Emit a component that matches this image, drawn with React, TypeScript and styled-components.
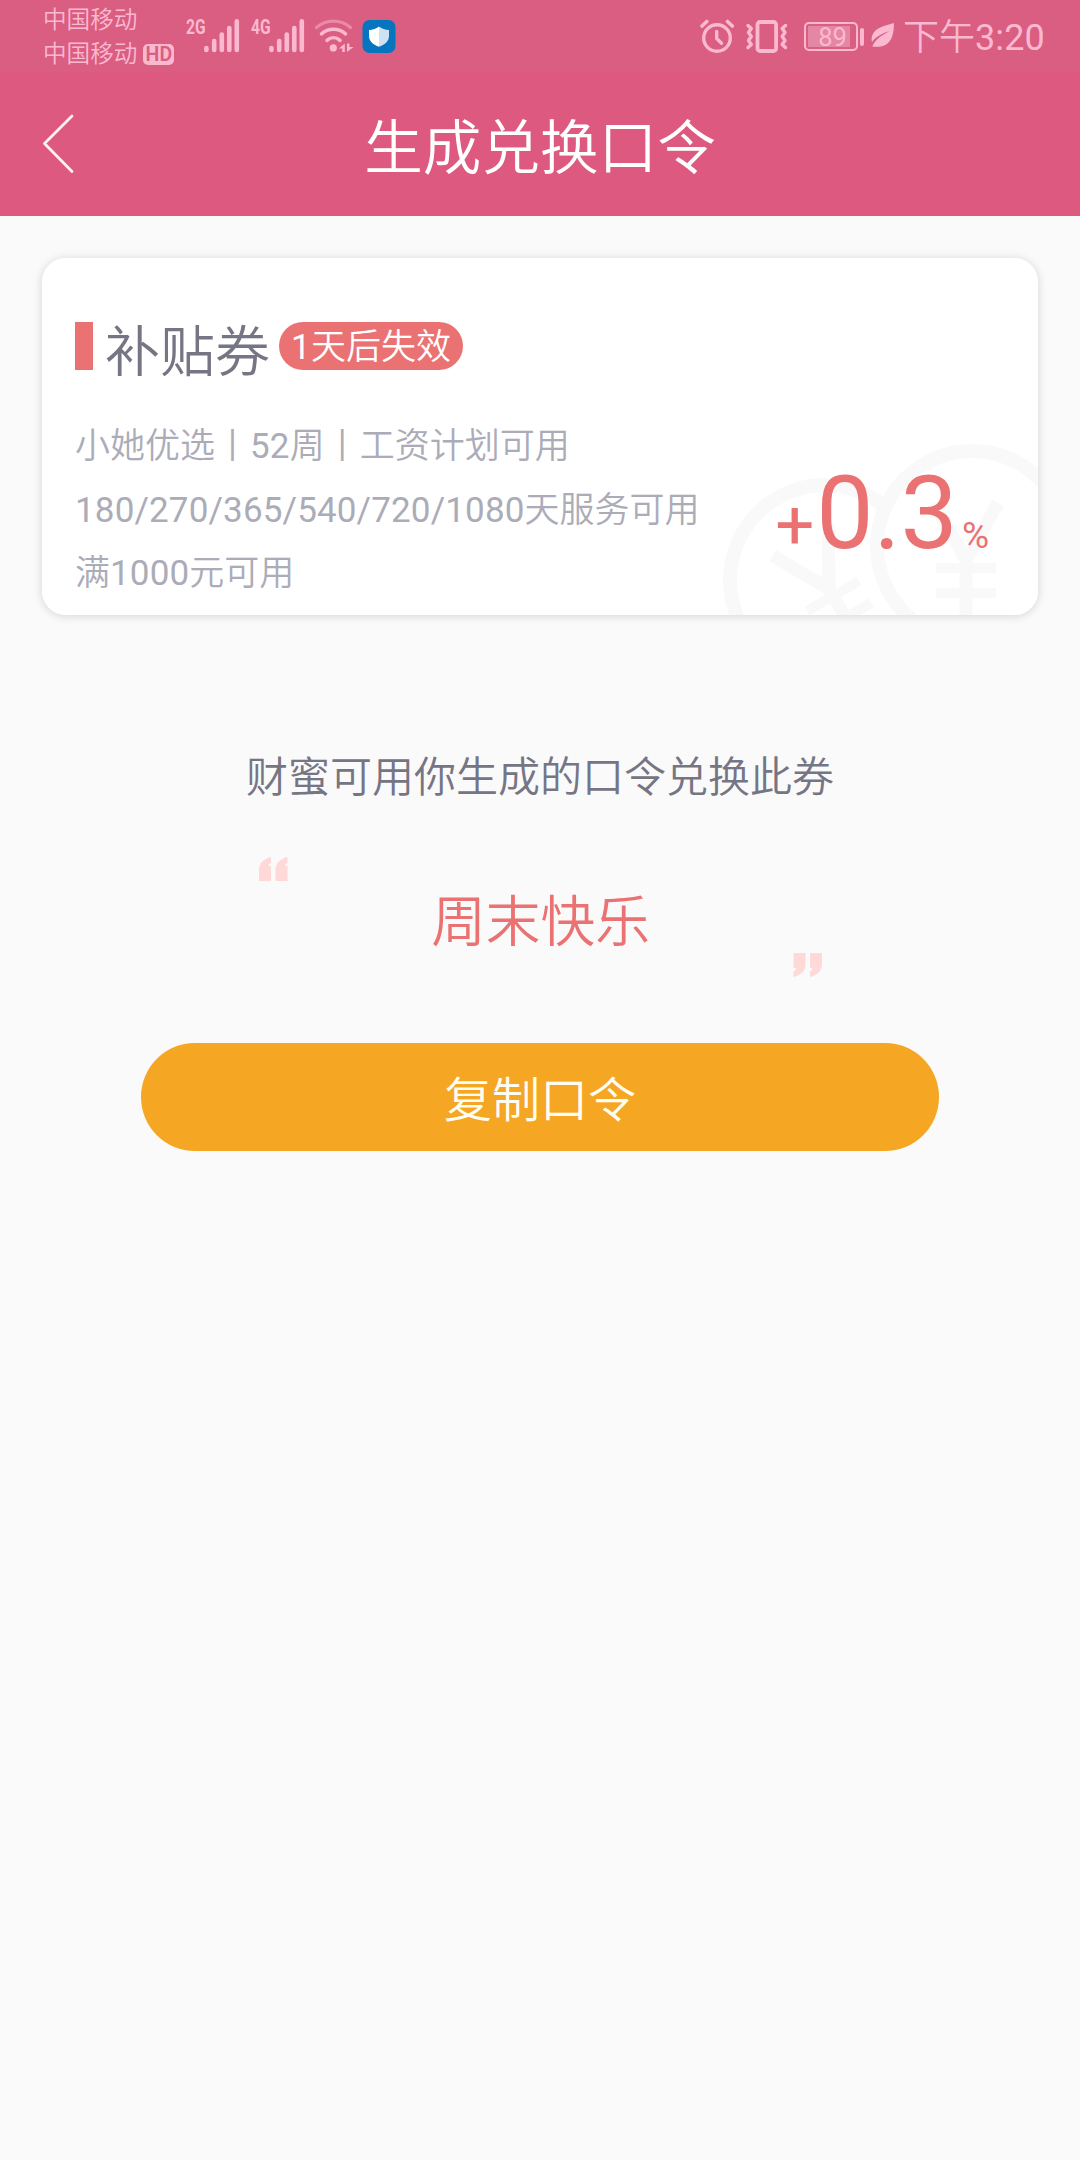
import React from "react";
import styled, { createGlobalStyle } from "styled-components";

const pink = "#de5980";
const statusPink = "#da5d82";
const statusInk = "#fbb9d0";
const coral = "#ea7272";
const slate = "#767584";
const mist = "#abacb8";

const GlobalStyle = createGlobalStyle`
  * { box-sizing: border-box; }
  body {
    margin: 0;
    background: #fafafa;
    font-family: Roboto, "Noto Sans CJK SC", sans-serif;
    font-weight: 350;
  }
`;

const Screen = styled.div`
  width: 1080px;
  min-height: 2160px;
  background: #fafafa;
  display: flex;
  flex-direction: column;
`;

const Num = styled.span`
  font-weight: 400;
  letter-spacing: 0.15px;
`;

/* Status bar */
const StatusBar = styled.div`
  height: 72px;
  background: ${statusPink};
  color: ${statusInk};
  display: flex;
  justify-content: space-between;
  padding: 0 35px 0 43px;
`;

const StatusGroup = styled.div`
  display: flex;
  align-items: flex-start;
`;

const Carriers = styled.div`
  display: flex;
  flex-direction: column;
  padding-top: 3px;
  width: 143px;
`;

const CarrierLine = styled.div`
  display: flex;
  align-items: center;
  gap: 6px;
  height: 34px;
  font-size: 23.6px;
  line-height: 34px;
`;

const HdBadge = styled.span`
  width: 31px;
  height: 21px;
  border-radius: 5px;
  background: ${statusInk};
  color: ${statusPink};
  font-size: 19.5px;
  font-weight: 600;
  line-height: 22px;
  text-align: center;
`;

const Signal = styled.div`
  display: flex;
  margin-top: 19px;
  width: 65px;
`;

const NetLabel = styled.span`
  width: 18px;
  font-size: 21px;
  font-weight: 700;
  line-height: 16px;
  transform: scaleX(0.74);
  transform-origin: left center;
`;

const StatusIcon = styled.svg<{ $gap?: number }>`
  display: block;
  flex: none;
  margin-top: 18px;
  margin-left: ${(p) => p.$gap ?? 0}px;
`;

const Bars = styled.svg`
  display: block;
  flex: none;
`;

const Battery = styled.div`
  display: flex;
  align-items: center;
  gap: 2px;
  margin: 22px 0 0 15px;
`;

const BatteryCell = styled.div`
  width: 54px;
  height: 29px;
  border: 2px solid ${statusInk};
  border-radius: 5px;
  padding: 2px;
`;

const BatteryFill = styled.div`
  width: 42px;
  height: 21px;
  background: #e586a5;
  display: flex;
  justify-content: flex-end;
  padding-right: 3px;
  font-size: 25.5px;
  font-weight: 400;
  line-height: 22px;
`;

const BatteryTip = styled.div`
  width: 4px;
  height: 18px;
  border-radius: 2px;
  background: ${statusInk};
`;

const Clock = styled.div`
  margin-left: 8px;
  font-size: 36px;
  line-height: 76px;
  white-space: nowrap;
`;

/* Title bar */
const TitleBar = styled.header`
  height: 144px;
  background: ${pink};
  color: #fff;
  display: grid;
  grid-template-columns: 120px 1fr 120px;
  align-items: center;
`;

const BackButton = styled.button`
  border: 0;
  padding: 0 0 0 41px;
  background: none;
  display: flex;
`;

const PageTitle = styled.h1`
  margin: 0;
  padding-top: 9px;
  font-size: 58.6px;
  font-weight: 350;
  line-height: 80px;
  text-align: center;
`;

const Content = styled.main`
  display: flex;
  flex-direction: column;
  align-items: center;
  padding: 42px 42px 0;
`;

/* Coupon */
const Coupon = styled.section`
  position: relative;
  overflow: hidden;
  width: 996px;
  height: 356.5px;
  padding: 64px 49px 0 33px;
  border-radius: 24px;
  background: #fff;
`;

const CouponShadow = styled.div`
  border-radius: 24px;
  box-shadow: 0 1px 8px 1px rgba(0, 0, 0, 0.13);
`;

const Watermark = styled.svg`
  position: absolute;
  right: 0;
  bottom: 0;
`;

const CouponHead = styled.div`
  position: relative;
  display: flex;
  align-items: flex-start;
  height: 48px;
`;

const Marker = styled.div`
  width: 18px;
  height: 48px;
  margin-right: 12px;
  background: ${coral};
`;

const CouponName = styled.h2`
  margin: 0;
  width: 174px;
  color: ${slate};
  font-size: 55px;
  font-weight: 350;
  line-height: 60px;
  white-space: nowrap;
`;

const Expiry = styled.span`
  width: 184px;
  height: 48px;
  border-radius: 24px;
  background: ${coral};
  color: #fff;
  font-size: 35px;
  line-height: 52px;
  text-align: center;
`;

const CouponBody = styled.div`
  position: relative;
  display: flex;
  justify-content: space-between;
  margin-top: 44px;
`;

const Rules = styled.div`
  padding-top: 1px;
  color: ${mist};
  font-size: 35px;
  line-height: 63px;
`;

const Rule = styled.p`
  margin: 0;
  white-space: nowrap;

  &:first-child {
    margin-bottom: 1px;
  }
`;

const Rate = styled.div`
  display: flex;
  align-items: baseline;
  margin-top: 48px;
  height: 102px;
  color: ${coral};
  font-weight: 400;
  line-height: 102px;
`;

const RateSign = styled.span`
  font-size: 69px;
  line-height: 1;
  margin-right: 2px;
`;

const RateValue = styled.span`
  font-size: 102px;
`;

const RateUnit = styled.span`
  margin-left: 4px;
  font-size: 37px;
  line-height: 1;
`;

/* Passphrase */
const Hint = styled.p`
  margin: 138.5px 0 0;
  color: ${slate};
  font-size: 42px;
  line-height: 50px;
`;

const PhraseBox = styled.div`
  display: flex;
  justify-content: space-between;
  width: 564px;
  height: 120px;
  margin-top: 54px;
  padding-left: 1px;
`;

const QuoteMark = styled.svg<{ $end?: boolean }>`
  align-self: ${(p) => (p.$end ? "flex-end" : "flex-start")};
  transform: ${(p) => (p.$end ? "rotate(180deg)" : "none")};
  fill: #ffd8d8;
`;

const Phrase = styled.strong`
  color: ${coral};
  font-size: 54.7px;
  font-weight: 350;
  line-height: 130px;
`;

const CopyButton = styled.button`
  width: 798px;
  height: 108px;
  margin-top: 66px;
  border: 0;
  border-radius: 54px;
  padding: 0 0 2px;
  background: #f5a623;
  color: #fffdf0;
  font-family: inherit;
  font-size: 48px;
  font-weight: 350;
`;

function SignalStrength({ label }: { label: string }) {
  return (
    <Signal>
      <NetLabel>{label}</NetLabel>
      <Bars width="36" height="34" viewBox="0 0 36 34">
        <g stroke={statusInk} strokeWidth="4.6" strokeLinecap="round">
          <path d="M2.4 29V31M10.2 22V31M17.8 15.5V31M25.3 9V31M32.8 2.4V31" />
        </g>
      </Bars>
    </Signal>
  );
}

function WifiIcon() {
  return (
    <StatusIcon $gap={-2} width="40" height="36" viewBox="0 0 40 36" fill="none" strokeLinecap="round">
      <path d="M2.5 9.5C12 1 27 1 36.5 9.5" stroke="#e98aa8" strokeWidth="3.2" />
      <path d="M7.5 15.8C14.5 9.8 24.5 9.8 31.5 15.8" stroke={statusInk} strokeWidth="3.6" />
      <path d="M13 22.300C17 18.8 22 18.8 26 22.300" stroke={statusInk} strokeWidth="3.6" />
      <circle cx="19.3" cy="29.9" r="3.6" fill={statusInk} />
      <path d="M25 30.500L30.800 25.500V34H28.300V30.500ZM33 25.500H35.400V29H39.500L33 34Z" fill={statusInk} />
    </StatusIcon>
  );
}

function ShieldIcon() {
  return (
    <StatusIcon $gap={8} width="34" height="36" viewBox="0 0 34 36">
      <rect x="0.5" y="2" width="33" height="33" rx="7" fill="#0575bf" />
      <path d="M17 8.5C14 11 11 11.8 7 12V18C7 23.5 11.5 26.7 17 28.8Z" fill="#fff" />
      <path d="M17 8.5C20 11 23 11.8 27 12V18C27 23.5 22.5 26.7 17 28.8Z" fill="#cfe2f2" />
    </StatusIcon>
  );
}

function AlarmIcon() {
  return (
    <StatusIcon width="34" height="36" viewBox="0 0 34 36" fill="none" stroke={statusInk} strokeLinecap="round" strokeLinejoin="round">
      <circle cx="17" cy="20" r="13.3" strokeWidth="3.4" />
      <path d="M16.7 13.5V20.5L21.5 25.3" strokeWidth="3.4" />
      <path d="M2 8L6.8 3.5M27.5 3.5L32.3 8" strokeWidth="3.6" />
    </StatusIcon>
  );
}

function VibrateIcon() {
  return (
    <StatusIcon $gap={11} width="44" height="36" viewBox="0 0 44 36" fill="none" stroke={statusInk} strokeLinecap="round" strokeLinejoin="round">
      <rect x="12.5" y="4" width="18.6" height="29" rx="2.5" strokeWidth="3.8" />
      <path d="M3 7.500L6.300 10.500L3.500 14.500L6.300 18.500L3.500 22.500L6.300 26.500L3 29.500" strokeWidth="3.4" />
      <path d="M40.500 7.500L37.200 10.500L40 14.500L37.200 18.500L40 22.500L37.200 26.500L40.500 29.500" strokeWidth="3.4" />
    </StatusIcon>
  );
}

function LeafIcon() {
  return (
    <StatusIcon $gap={6} width="25" height="36" viewBox="0 0 25 36">
      <path d="M24 5C15 8 5 9 2 18C1.400 20.500 1.500 22.500 2 24C6 18.500 12 15.500 19.500 13C13 17 6 20 2.300 28.500C12 30 19 27 22 19C24 13.500 23.800 9 24 5Z" fill={statusInk} />
    </StatusIcon>
  );
}

function Yen() {
  return (
    <g fill="none" stroke="#f9f9f9">
      <path d="M-32 -65L0 -8L32 -65M0 -10V60" strokeWidth="13" />
      <path d="M-30 0H30M-30 25H30" strokeWidth="10" />
    </g>
  );
}

function CoinWatermark() {
  return (
    <Watermark width="338" height="194" viewBox="700 420 338 194">
      <circle cx="825" cy="579" r="95" fill="none" stroke="#f9f9f9" strokeWidth="14" />
      <g transform="translate(833 595) rotate(-30)">
        <Yen />
      </g>
      <circle cx="972" cy="545" r="95" fill="#fff" stroke="#f9f9f9" strokeWidth="14" />
      <g transform="translate(966 567)">
        <Yen />
      </g>
    </Watermark>
  );
}

function Quote({ end }: { end?: boolean }) {
  return (
    <QuoteMark $end={end} width="29" height="24" viewBox="0 0 29 24">
      <path d="M0 24V13C0 6 4.500 2 12 0V5.500C9.800 6.600 9 7.800 9.500 8.500L12 9.500V24Z" />
      <path d="M16.500 24V13C16.500 6 21 2 28.500 0V5.500C26.300 6.600 25.500 7.800 26 8.500L28.500 9.500V24Z" />
    </QuoteMark>
  );
}

export default function App() {
  return (
    <Screen>
      <GlobalStyle />
      <StatusBar>
        <StatusGroup>
          <Carriers>
            <CarrierLine>中国移动</CarrierLine>
            <CarrierLine>
              中国移动<HdBadge>HD</HdBadge>
            </CarrierLine>
          </Carriers>
          <SignalStrength label="2G" />
          <SignalStrength label="4G" />
          <WifiIcon />
          <ShieldIcon />
        </StatusGroup>
        <StatusGroup>
          <AlarmIcon />
          <VibrateIcon />
          <Battery>
            <BatteryCell>
              <BatteryFill>89</BatteryFill>
            </BatteryCell>
            <BatteryTip />
          </Battery>
          <LeafIcon />
          <Clock>
            下午<Num>3:20</Num>
          </Clock>
        </StatusGroup>
      </StatusBar>

      <TitleBar>
        <BackButton aria-label="返回">
          <svg width="36" height="64" viewBox="0 0 36 64" fill="none" stroke="#fff0f5" strokeWidth="2.8" strokeLinecap="round" strokeLinejoin="round">
            <path d="M31 4L3.500 31.500L31 59.500" />
          </svg>
        </BackButton>
        <PageTitle>生成兑换口令</PageTitle>
      </TitleBar>

      <Content>
        <CouponShadow>
          <Coupon>
            <CoinWatermark />
            <CouponHead>
              <Marker />
              <CouponName>补贴券</CouponName>
              <Expiry>
                <Num>1</Num>天后失效
              </Expiry>
            </CouponHead>
            <CouponBody>
              <Rules>
                <Rule>
                  小她优选丨<Num>52</Num>周丨工资计划可用
                </Rule>
                <Rule>
                  <Num>180/270/365/540/720/1080</Num>天服务可用
                </Rule>
                <Rule>
                  满<Num>1000</Num>元可用
                </Rule>
              </Rules>
              <Rate>
                <RateSign>+</RateSign>
                <RateValue>0.3</RateValue>
                <RateUnit>%</RateUnit>
              </Rate>
            </CouponBody>
          </Coupon>
        </CouponShadow>

        <Hint>财蜜可用你生成的口令兑换此券</Hint>
        <PhraseBox>
          <Quote />
          <Phrase>周末快乐</Phrase>
          <Quote end />
        </PhraseBox>
        <CopyButton>复制口令</CopyButton>
      </Content>
    </Screen>
  );
}
